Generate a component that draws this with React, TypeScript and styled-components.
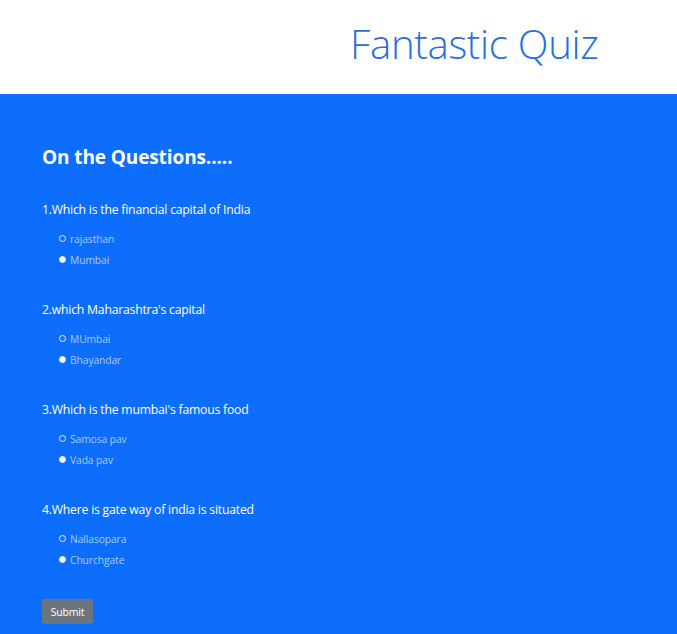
import React from "react";
import styled, { createGlobalStyle } from "styled-components";

const Global = createGlobalStyle`
  html, body { margin: 0; padding: 0; background: #0d6efd; }
  body { font-family: "Open Sans", "Noto Sans", sans-serif; }
`;

const Header = styled.header`
  height: 94px;
  background: #ffffff;
  display: flex;
  align-items: center;
  padding-left: 350px;
  box-sizing: border-box;
`;

const Title = styled.h1`
  margin: 0;
  font-weight: 300;
  font-size: 40.2px;
  color: #2a6fe0;
  letter-spacing: -0.3px;
  line-height: 1;
  transform: translateY(-3px);
`;

const Main = styled.main`
  background: #0d6efd;
  min-height: 540px;
  padding: 50px 42px 10px;
  box-sizing: border-box;
  color: #ffffff;
`;

const Heading = styled.h2`
  margin: 0 0 31px;
  font-size: 19px;
  font-weight: 700;
  line-height: 26px;
  letter-spacing: -0.1px;
`;

const Question = styled.section`
  display: flex;
  flex-direction: column;
  margin-bottom: 31px;
  &:last-of-type {
    margin-bottom: 29px;
  }
`;

const QText = styled.p`
  margin: 0 0 9px;
  font-size: 12.2px;
  font-weight: 400;
  line-height: 18px;
  letter-spacing: -0.2px;
`;

const Option = styled.label`
  display: flex;
  align-items: center;
  gap: 4px;
  margin-left: 17px;
  height: 21px;
  font-size: 10.3px;
  color: #a9c9ff;
  letter-spacing: -0.1px;
`;

const Dot = styled.span<{ $filled?: boolean }>`
  width: 7px;
  height: 7px;
  border-radius: 50%;
  box-sizing: border-box;
  border: 1.5px solid #e6efff;
  background: ${(p) => (p.$filled ? "#ffffff" : "transparent")};
  flex-shrink: 0;
`;

const SubmitButton = styled.button`
  display: block;
  width: 51px;
  height: 25px;
  border: none;
  border-radius: 3px;
  background: #6c757d;
  color: #ffffff;
  font-family: inherit;
  font-size: 10.5px;
  padding: 0;
  letter-spacing: -0.2px;
`;

const questions = [
  { q: "1.Which is the financial capital of India", opts: ["rajasthan", "Mumbai"] },
  { q: "2.which Maharashtra's capital", opts: ["MUmbai", "Bhayandar"] },
  { q: "3.Which is the mumbai's famous food", opts: ["Samosa pav", "Vada pav"] },
  { q: "4.Where is gate way of india is situated", opts: ["Nallasopara", "Churchgate"] },
];

export default function App() {
  return (
    <>
      <Global />
      <Header>
        <Title>Fantastic Quiz</Title>
      </Header>
      <Main>
        <Heading>On the Questions.....</Heading>
        {questions.map((item) => (
          <Question key={item.q}>
            <QText>{item.q}</QText>
            {item.opts.map((o, i) => (
              <Option key={o}>
                <Dot $filled={i === 1} />
                {o}
              </Option>
            ))}
          </Question>
        ))}
        <SubmitButton>Submit</SubmitButton>
      </Main>
    </>
  );
}
